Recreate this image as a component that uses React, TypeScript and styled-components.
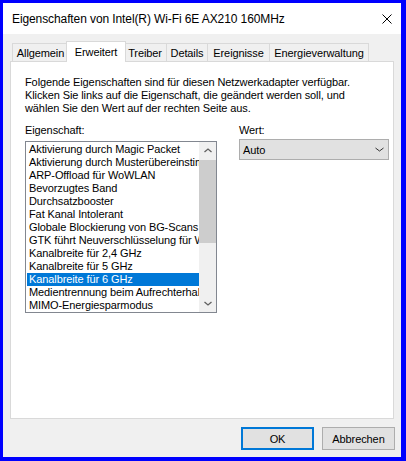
import React from "react";
import styled, { createGlobalStyle } from "styled-components";

const Global = createGlobalStyle`
  html, body { margin: 0; padding: 0; background: #0000ff; }
  body {
    width: 406px; height: 461px; overflow: hidden;
    font-family: "Liberation Sans", Arial, sans-serif;
    font-size: 11px; color: #000;
  }
  * { box-sizing: border-box; }
`;

const Window = styled.div`
  margin: 3px 0 0 3px;
  width: 398px;
  height: 454px;
  background: #f0f0f0;
  display: flex;
  flex-direction: column;
`;

const TitleBar = styled.div`
  height: 31px;
  background: #fff;
  display: flex;
  align-items: center;
  justify-content: space-between;
  padding: 1px 9px 0 9px;
`;

const Title = styled.div`
  font-size: 12px;
  line-height: 16px;
  letter-spacing: -0.1px;
`;

const Body = styled.div`
  flex: 1;
  display: flex;
  flex-direction: column;
  padding: 7px 7px 0 7px;
  letter-spacing: -0.1px;
`;

const TabStrip = styled.div`
  display: flex;
  align-items: flex-end;
  height: 20px;
  padding-left: 2px;
`;

const Tab = styled.div<{ $w: number; $active?: boolean }>`
  width: ${(p) => (p.$active ? p.$w + 4 : p.$w)}px;
  height: ${(p) => (p.$active ? 21 : 18)}px;
  margin: 0 ${(p) => (p.$active ? -3 : -1)}px ${(p) => (p.$active ? -1 : 0)}px
    ${(p) => (p.$active ? -2 : 0)}px;
  border: 1px solid #d9d9d9;
  border-bottom: none;
  background: ${(p) => (p.$active ? "#fff" : "#f0f0f0")};
  position: relative;
  z-index: ${(p) => (p.$active ? 1 : 0)};
  display: flex;
  align-items: center;
  justify-content: center;
  white-space: nowrap;
  padding-top: ${(p) => (p.$active ? 0 : 1)}px;
`;

const Panel = styled.div`
  height: 358px;
  background: #fff;
  border: 1px solid #d9d9d9;
  padding: 14px 0 0 14px;
  display: flex;
  flex-direction: column;
`;

const Intro = styled.div`
  line-height: 13px;
  white-space: nowrap;
`;

const Columns = styled.div`
  display: flex;
  margin-top: 9px;
`;

const PropCol = styled.div`
  width: 192px;
  flex-shrink: 0;
  display: flex;
  flex-direction: column;
`;

const ValueCol = styled.div`
  width: 150px;
  flex-shrink: 0;
  margin-left: 22px;
  display: flex;
  flex-direction: column;
`;

const Label = styled.div`
  line-height: 13px;
  height: 13px;
`;

const ListBox = styled.div`
  margin-top: 4px;
  height: 172px;
  border: 1px solid #828790;
  display: flex;
`;

const Items = styled.div`
  flex: 1;
  overflow: hidden;
  padding: 1px 0 0 1px;
`;

const Item = styled.div<{ $sel?: boolean }>`
  height: 13px;
  line-height: 13px;
  padding-left: 2px;
  white-space: nowrap;
  overflow: hidden;
  background: ${(p) => (p.$sel ? "#0078d7" : "transparent")};
  color: ${(p) => (p.$sel ? "#fff" : "#000")};
`;

const ScrollBar = styled.div`
  width: 17px;
  background: #f0f0f0;
  display: flex;
  flex-direction: column;
`;

const Arrow = styled.div`
  height: 17px;
  display: flex;
  align-items: center;
  justify-content: center;
`;

const Thumb = styled.div`
  margin-top: 1px;
  height: 83px;
  background: #cdcdcd;
`;

const Spacer = styled.div`
  flex: 1;
`;

const Combo = styled.div`
  margin-top: 2px;
  height: 21px;
  background: #e1e1e1;
  border: 1px solid #adadad;
  display: flex;
  align-items: center;
  justify-content: space-between;
  padding: 0 4px 0 3px;
`;

const ButtonRow = styled.div`
  display: flex;
  justify-content: flex-end;
  gap: 8px;
  margin-top: 8px;
  margin-right: -1px;
`;

const Button = styled.div<{ $default?: boolean }>`
  width: 73px;
  height: 23px;
  background: #e1e1e1;
  border: ${(p) => (p.$default ? "2px solid #0078d7" : "1px solid #adadad")};
  display: flex;
  align-items: center;
  justify-content: center;
`;

const Chevron = ({
  up,
  color = "#606060",
  w = 9,
  h = 6,
  sw = 1.3,
}: {
  up?: boolean;
  color?: string;
  w?: number;
  h?: number;
  sw?: number;
}) => (
  <svg width={w} height={h} viewBox={`0 0 ${w} ${h}`}>
    <polyline
      points={
        up
          ? `0.5,${h - 1} ${w / 2},1 ${w - 0.5},${h - 1}`
          : `0.5,1 ${w / 2},${h - 1} ${w - 0.5},1`
      }
      fill="none"
      stroke={color}
      strokeWidth={sw}
    />
  </svg>
);

const tabs: [string, number][] = [
  ["Allgemein", 57],
  ["Erweitert", 56],
  ["Treiber", 44],
  ["Details", 42],
  ["Ereignisse", 63],
  ["Energieverwaltung", 100],
];

const items = [
  "Aktivierung durch Magic Packet",
  "Aktivierung durch Musterübereinstimmung",
  "ARP-Offload für WoWLAN",
  "Bevorzugtes Band",
  "Durchsatzbooster",
  "Fat Kanal Intolerant",
  "Globale Blockierung von BG-Scans",
  "GTK führt Neuverschlüsselung für WoWLAN",
  "Kanalbreite für 2,4 GHz",
  "Kanalbreite für 5 GHz",
  "Kanalbreite für 6 GHz",
  "Medientrennung beim Aufrechterhalten",
  "MIMO-Energiesparmodus",
];

export default function App() {
  return (
    <>
      <Global />
      <Window>
        <TitleBar>
          <Title>Eigenschaften von Intel(R) Wi-Fi 6E AX210 160MHz</Title>
          <svg width="10" height="10" viewBox="0 0 10 10">
            <path d="M0.5 0.5 L9.5 9.5 M9.5 0.5 L0.5 9.5" stroke="#000" strokeWidth="1" />
          </svg>
        </TitleBar>
        <Body>
          <TabStrip>
            {tabs.map(([t, w]) => (
              <Tab key={t} $w={w} $active={t === "Erweitert"}>
                {t}
              </Tab>
            ))}
          </TabStrip>
          <Panel>
            <Intro>
              Folgende Eigenschaften sind für diesen Netzwerkadapter verfügbar.
              <br />
              Klicken Sie links auf die Eigenschaft, die geändert werden soll, und
              <br />
              wählen Sie den Wert auf der rechten Seite aus.
            </Intro>
            <Columns>
              <PropCol>
                <Label>Eigenschaft:</Label>
                <ListBox>
                  <Items>
                    {items.map((it) => (
                      <Item key={it} $sel={it === "Kanalbreite für 6 GHz"}>
                        {it}
                      </Item>
                    ))}
                  </Items>
                  <ScrollBar>
                    <Arrow>
                      <Chevron up w={8} h={5} />
                    </Arrow>
                    <Thumb />
                    <Spacer />
                    <Arrow>
                      <Chevron w={8} h={5} />
                    </Arrow>
                  </ScrollBar>
                </ListBox>
              </PropCol>
              <ValueCol>
                <Label>Wert:</Label>
                <Combo>
                  <span>Auto</span>
                  <Chevron color="#333" w={9} h={5} sw={1} />
                </Combo>
              </ValueCol>
            </Columns>
          </Panel>
          <ButtonRow>
            <Button $default>OK</Button>
            <Button>Abbrechen</Button>
          </ButtonRow>
        </Body>
      </Window>
    </>
  );
}
